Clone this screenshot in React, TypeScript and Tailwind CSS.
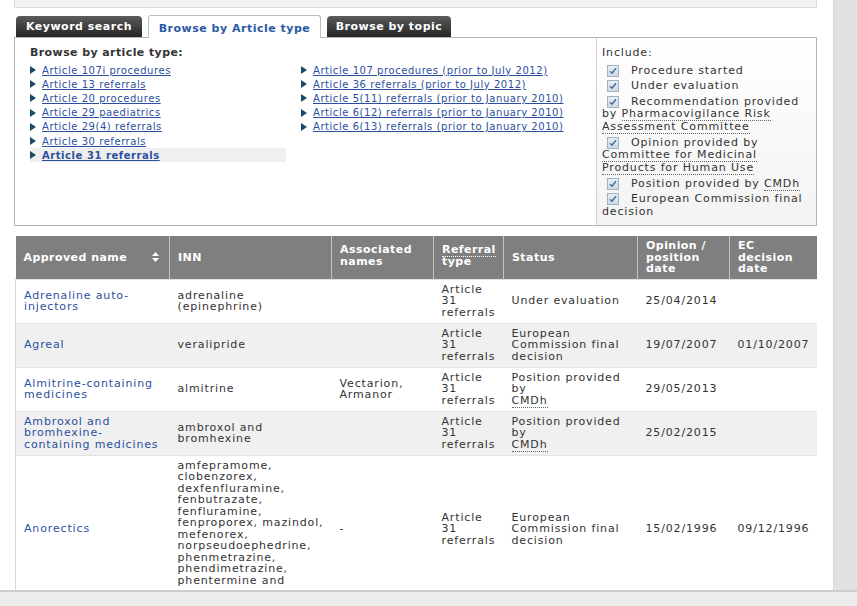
import React from 'react';

const leftLinks = [
  'Article 107i procedures',
  'Article 13 referrals',
  'Article 20 procedures',
  'Article 29 paediatrics',
  'Article 29(4) referrals',
  'Article 30 referrals',
  'Article 31 referrals',
];

const rightLinks = [
  'Article 107 procedures (prior to July 2012)',
  'Article 36 referrals (prior to July 2012)',
  'Article 5(11) referrals (prior to January 2010)',
  'Article 6(12) referrals (prior to January 2010)',
  'Article 6(13) referrals (prior to January 2010)',
];

type Row = {
  name: string[];
  inn: string[];
  assoc: string[];
  status: React.ReactNode;
  opinion: string;
  ec: string;
  tall?: boolean;
};

function Abbr({ children, light }: { children: React.ReactNode; light?: boolean }) {
  return (
    <span className={`border-b border-dotted ${light ? 'border-white' : 'border-[#666]'}`}>{children}</span>
  );
}

const cmdhStatus = (
  <>
    Position provided
    <br />
    by
    <br />
    <Abbr>CMDh</Abbr>
  </>
);

const ecStatus = (
  <>
    European
    <br />
    Commission final
    <br />
    decision
  </>
);

const rows: Row[] = [
  {
    name: ['Adrenaline auto-', 'injectors'],
    inn: ['adrenaline', '(epinephrine)'],
    assoc: [],
    status: 'Under evaluation',
    opinion: '25/04/2014',
    ec: '',
  },
  {
    name: ['Agreal'],
    inn: ['veralipride'],
    assoc: [],
    status: ecStatus,
    opinion: '19/07/2007',
    ec: '01/10/2007',
  },
  {
    name: ['Almitrine-containing', 'medicines'],
    inn: ['almitrine'],
    assoc: ['Vectarion,', 'Armanor'],
    status: cmdhStatus,
    opinion: '29/05/2013',
    ec: '',
  },
  {
    name: ['Ambroxol and', 'bromhexine-', 'containing medicines'],
    inn: ['ambroxol and', 'bromhexine'],
    assoc: [],
    status: cmdhStatus,
    opinion: '25/02/2015',
    ec: '',
  },
  {
    name: ['Anorectics'],
    inn: [
      'amfepramome,',
      'clobenzorex,',
      'dexfenfluramine,',
      'fenbutrazate,',
      'fenfluramine,',
      'fenproporex, mazindol,',
      'mefenorex,',
      'norpseudoephedrine,',
      'phenmetrazine,',
      'phendimetrazine,',
      'phentermine and',
    ],
    assoc: ['-'],
    status: ecStatus,
    opinion: '15/02/1996',
    ec: '09/12/1996',
    tall: true,
  },
];

const includes: React.ReactNode[] = [
  'Procedure started',
  'Under evaluation',
  <>
    Recommendation provided by <Abbr>Pharmacovigilance Risk Assessment Committee</Abbr>
  </>,
  <>
    Opinion provided by <Abbr>Committee for Medicinal Products for Human Use</Abbr>
  </>,
  <>
    Position provided by <Abbr>CMDh</Abbr>
  </>,
  'European Commission final decision',
];

function Lines({ lines }: { lines: string[] }) {
  return (
    <>
      {lines.map((l, i) => (
        <React.Fragment key={i}>
          {i > 0 && <br />}
          {l}
        </React.Fragment>
      ))}
    </>
  );
}

function Bullet() {
  return (
    <svg width="6" height="8" viewBox="0 0 6 8" className="shrink-0">
      <path d="M0 0 L6 4 L0 8 Z" fill="#1a4a68" />
    </svg>
  );
}

function CheckBox() {
  return (
    <span className="inline-flex w-[12px] h-[12px] ml-[5px] mr-[12px] align-top items-center justify-center border border-[#9fb2c4] bg-gradient-to-b from-[#e9eef4] to-[#cfd9e4]">
      <svg width="8" height="8" viewBox="0 0 8 8">
        <path d="M1 4.2 L3 6.3 L7 1.2" fill="none" stroke="#3f6d9c" strokeWidth="1.4" />
      </svg>
    </span>
  );
}

function LinkItem({ text, active }: { text: string; active?: boolean }) {
  return (
    <li className={`flex items-center gap-[6px] h-[14.2px] whitespace-nowrap ${active ? 'bg-[#efefef]' : ''}`}>
      <Bullet />
      <a className={`text-[#2b4f9e] underline underline-offset-1 ${active ? 'font-bold' : ''}`}>{text}</a>
    </li>
  );
}

export default function App() {
  return (
    <div className="w-[857px] h-[606px] overflow-hidden bg-white flex flex-col font-['DejaVu_Sans',sans-serif] text-[#333]">
      <div className="flex flex-1 min-h-0">
        <main className="w-[817px] pl-[14px] overflow-hidden">
          <div className="h-[8px] bg-[#f2f2f2] border-b border-x border-[#dcdcdc]" />

          {/* tabs */}
          <div className="flex items-end gap-[6px] mt-[6px] pl-[2px] h-[23px] text-[11px] font-bold tracking-[0.5px]">
            <div className="h-[21px] w-[126px] pt-[2px] flex items-center justify-center rounded-t-[4px] bg-gradient-to-b from-[#5c5c5c] to-[#262626] text-white">
              Keyword search
            </div>
            <div className="h-[23px] w-[173px] pt-[4px] flex items-center justify-center rounded-t-[3px] bg-white border-x border-t border-[#bdbdbd] text-[#2b5aa5] relative top-px">
              Browse by Article type
            </div>
            <div className="h-[21px] w-[124px] pt-[2px] flex items-center justify-center rounded-t-[4px] bg-gradient-to-b from-[#5c5c5c] to-[#262626] text-white">
              Browse by topic
            </div>
          </div>

          {/* panel */}
          <div className="h-[189px] border border-[#b5b5b5] flex">
            <div className="flex-1 pl-[15px] pt-[8px]">
              <div className="text-[11px] font-bold leading-[13px] tracking-[0.4px]">Browse by article type:</div>
              <div className="flex gap-[15px] mt-[4px] text-[10px] tracking-[0.55px]">
                <ul className="w-[256px]">
                  {leftLinks.map((l, i) => (
                    <LinkItem key={l} text={l} active={i === leftLinks.length - 1} />
                  ))}
                </ul>
                <ul>
                  {rightLinks.map((l) => (
                    <LinkItem key={l} text={l} />
                  ))}
                </ul>
              </div>
            </div>
            <div className="w-[220px] border-l border-[#cfcfcf] bg-gradient-to-b from-white to-[#f3f3f3] pl-[5px] pr-[6px] pt-[9px] text-[11px] leading-[12.8px] tracking-[0.85px]">
              <div>Include:</div>
              <div className="mt-[5px]">
                {includes.map((item, i) => (
                  <div key={i} className="mt-[2.6px]">
                    <CheckBox />
                    {item}
                  </div>
                ))}
              </div>
            </div>
          </div>

          {/* results table */}
          <table className="mt-[10px] ml-px w-[802px] table-fixed border-collapse text-[11px] leading-[11.5px] tracking-[0.85px] whitespace-nowrap">
            <colgroup>
              <col className="w-[154px]" />
              <col className="w-[162px]" />
              <col className="w-[102px]" />
              <col className="w-[70px]" />
              <col className="w-[134px]" />
              <col className="w-[92px]" />
              <col className="w-[88px]" />
            </colgroup>
            <thead>
              <tr className="h-[43px] bg-[#7f7f7f] text-white font-bold text-left tracking-[0.45px]">
                <th className="px-2 align-middle border-r border-[#c4c4c4]">
                  <div className="flex items-center justify-between pr-[2px]">
                    <span>Approved name</span>
                    <svg width="7" height="10" viewBox="0 0 7 10">
                      <path d="M3.5 0 L7 4 L0 4 Z M3.5 10 L7 6 L0 6 Z" fill="white" />
                    </svg>
                  </div>
                </th>
                <th className="px-2 align-middle border-r border-[#c4c4c4]">INN</th>
                <th className="px-2 align-top pt-[8px] border-r border-[#c4c4c4]">
                  Associated
                  <br />
                  names
                </th>
                <th className="px-2 align-top pt-[8px] border-r border-[#c4c4c4]">
                  <Abbr light>Referral</Abbr>
                  <br />
                  type
                </th>
                <th className="px-2 align-middle border-r border-[#c4c4c4]">Status</th>
                <th className="px-2 align-middle border-r border-[#c4c4c4]">
                  Opinion /
                  <br />
                  position
                  <br />
                  date
                </th>
                <th className="px-2 align-middle">
                  EC
                  <br />
                  decision
                  <br />
                  date
                </th>
              </tr>
            </thead>
            <tbody>
              {rows.map((r, i) => (
                <tr
                  key={i}
                  className={`h-[44px] border-t border-[#e2e2e2] ${i % 2 === 1 ? 'bg-[#f0f0f0]' : 'bg-white'}`}
                >
                  <td className="px-2 py-[4px] align-middle border-l border-[#d6d6d6]">
                    <a className="text-[#2b4f9e]">
                      <Lines lines={r.name} />
                    </a>
                  </td>
                  <td className={`px-2 pt-[4px] align-middle ${r.tall ? 'pb-[16px]' : 'pb-[4px]'}`}>
                    <Lines lines={r.inn} />
                  </td>
                  <td className="px-2 py-[4px] align-middle">
                    <Lines lines={r.assoc} />
                  </td>
                  <td className="px-2 py-[4px] align-middle">
                    Article
                    <br />
                    31
                    <br />
                    referrals
                  </td>
                  <td className="px-2 py-[4px] align-middle">{r.status}</td>
                  <td className="px-2 py-[4px] align-middle">{r.opinion}</td>
                  <td className="px-2 py-[4px] align-middle border-r border-[#d6d6d6]">{r.ec}</td>
                </tr>
              ))}
            </tbody>
          </table>
        </main>
        <div className="w-[16px] bg-white" />
        <div className="flex-1 bg-[#e2e2e2] border-l border-[#d8d8d8]" />
      </div>
      <div className="h-[16px] shrink-0 bg-[#ececec] border-t-2 border-[#cdcdcd]" />
    </div>
  );
}
